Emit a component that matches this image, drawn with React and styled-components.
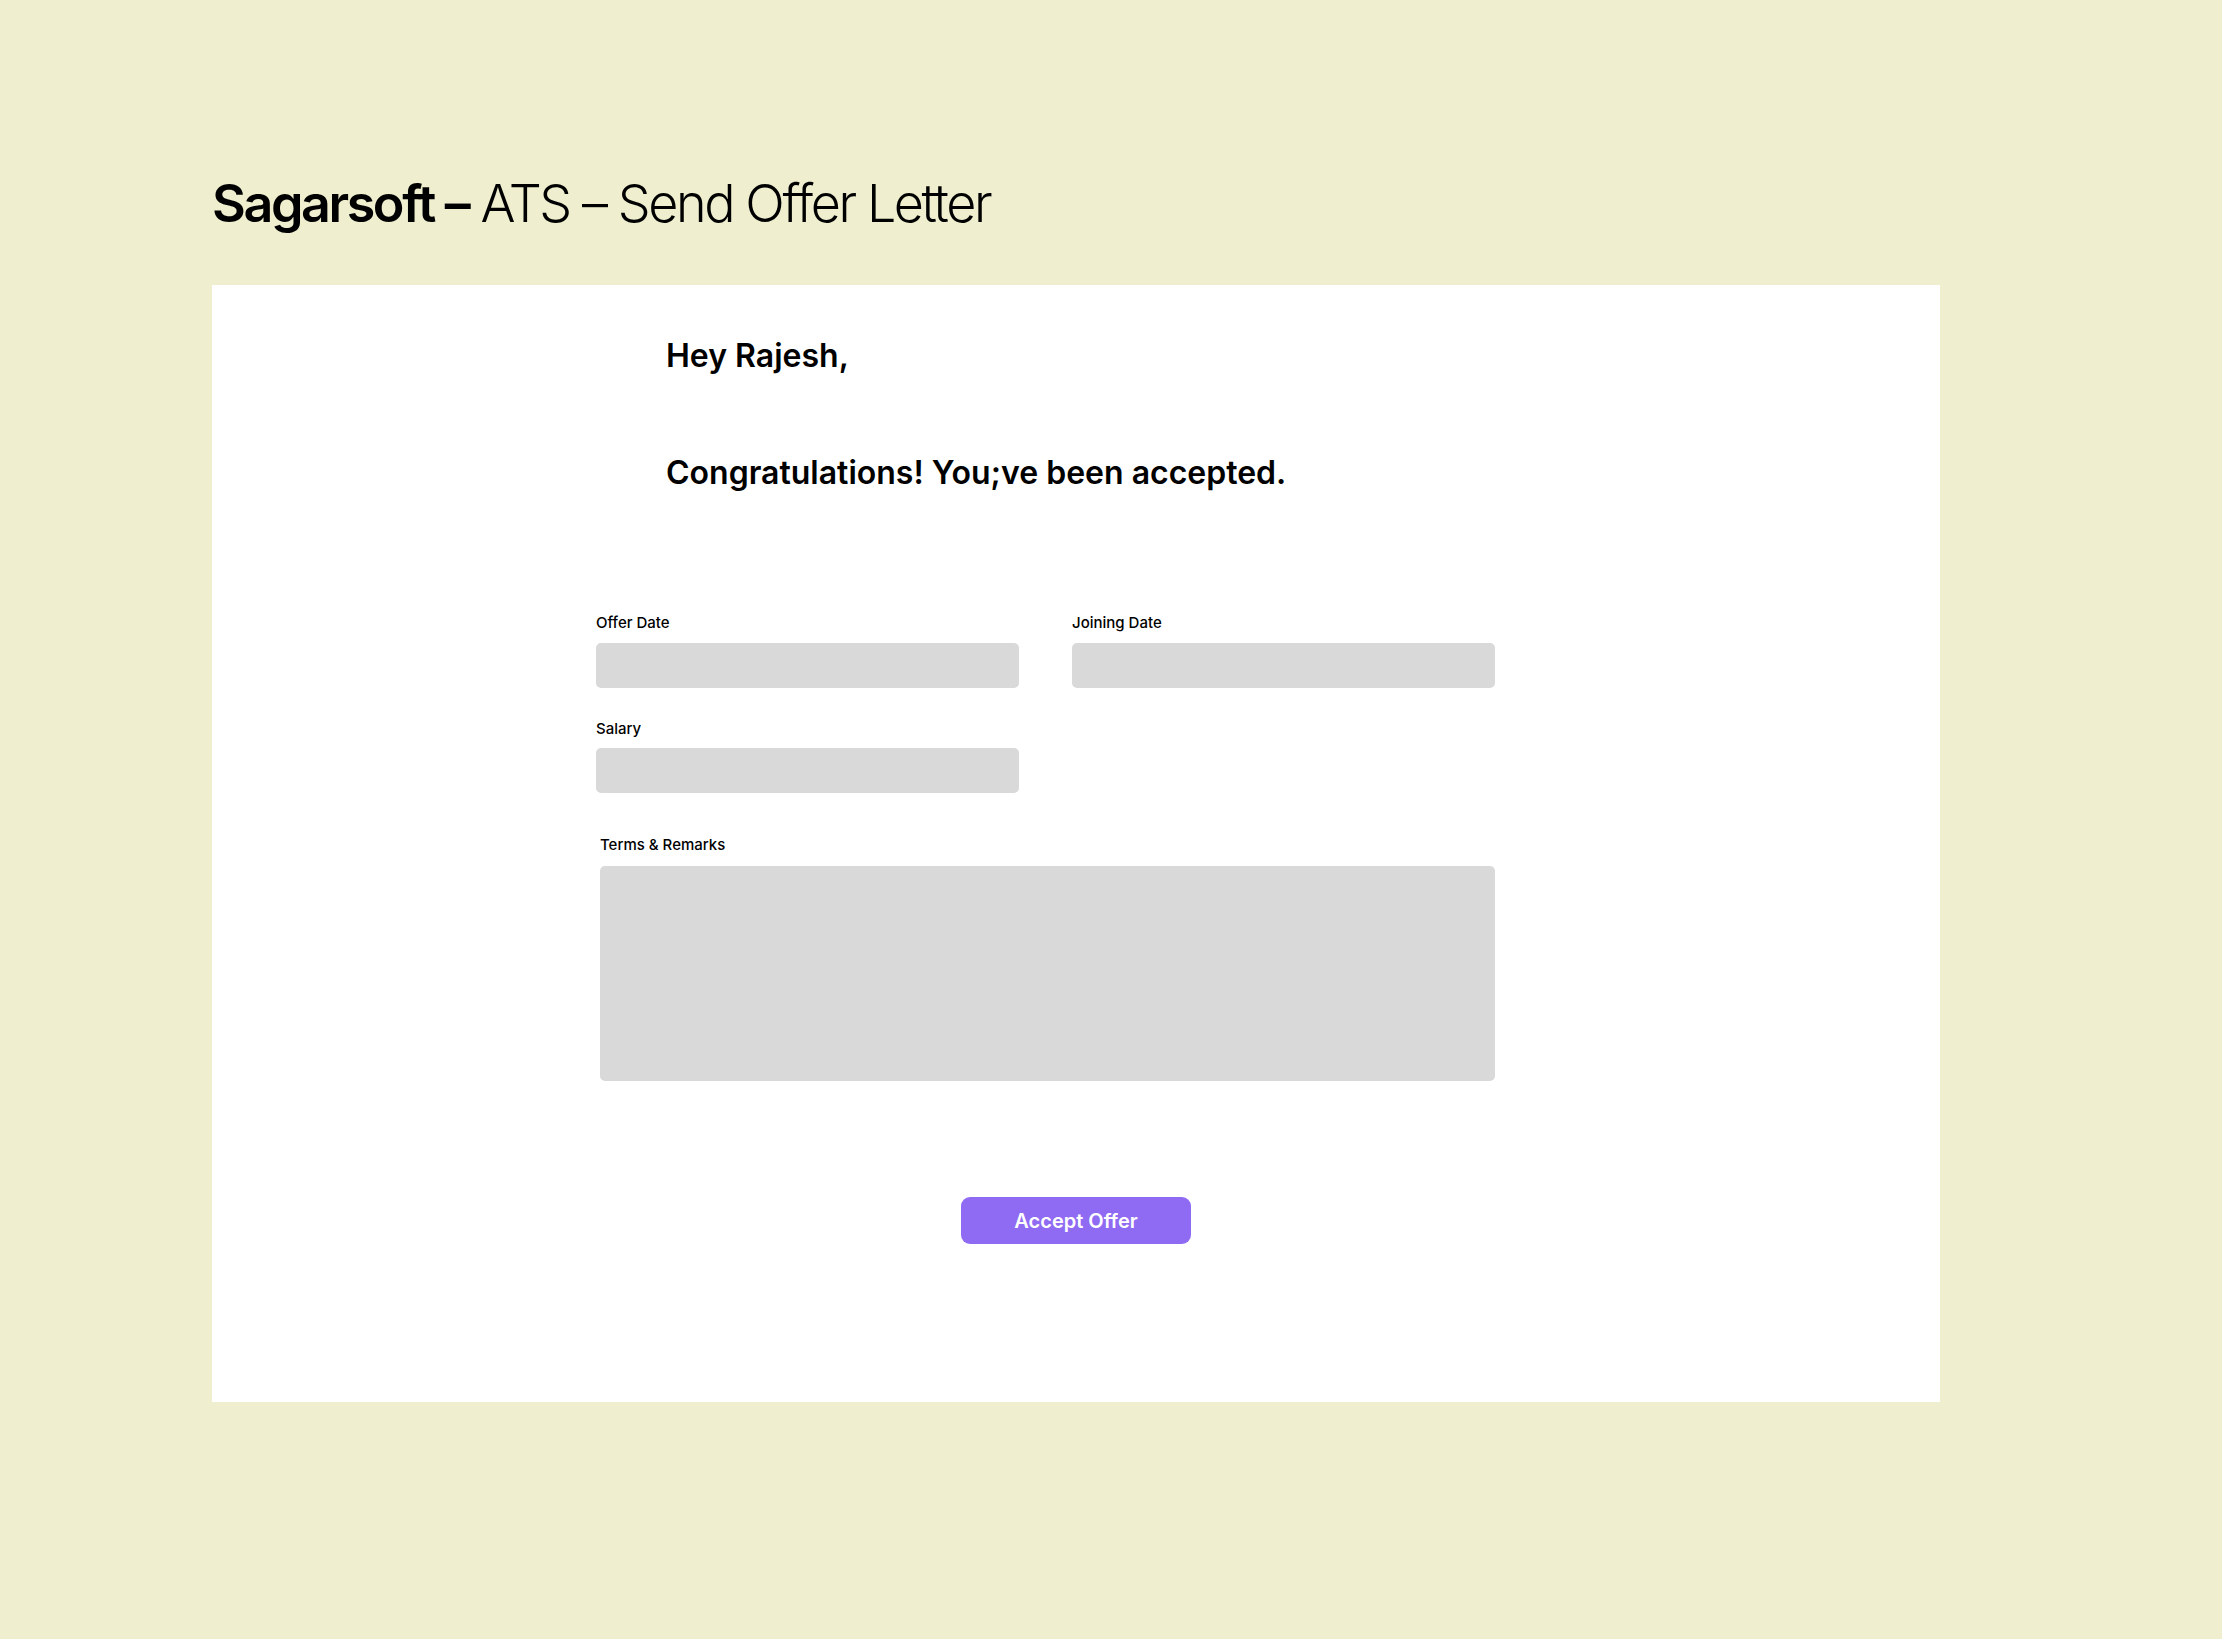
import React from 'react';
import styled, { createGlobalStyle } from 'styled-components';

const GlobalStyle = createGlobalStyle`
  body {
    margin: 0;
    background: #efefcf;
    font-family: Inter, "Noto Sans", sans-serif;
    color: #000;
  }
`;

const Page = styled.div`
  padding: 172px 282px 200px 212px;
`;

const Title = styled.h1`
  margin: 0 0 50px;
  font-size: 52px;
  line-height: 63px;
  font-weight: 300;
  letter-spacing: -2.4px;

  strong {
    font-weight: 600;
  }
`;

const Card = styled.div`
  background: #fff;
  height: 1117px;
  box-sizing: border-box;
  padding: 51px 0 0;
  display: flex;
  flex-direction: column;
`;

const Letter = styled.div`
  margin-left: 454px;
  display: flex;
  flex-direction: column;
  gap: 78px;
`;

const Line = styled.p`
  margin: 0;
  font-size: 32px;
  line-height: 39px;
  font-weight: 600;
`;

const Form = styled.div`
  margin: 122px 0 0 384px;
  width: 899px;
  display: grid;
  grid-template-columns: 423px 423px;
  column-gap: 53px;
  row-gap: 32px;
`;

const Field = styled.label`
  display: flex;
  flex-direction: column;
  gap: ${(p) => p.gap || 11}px;
  grid-column: ${(p) => (p.wide ? '1 / -1' : 'auto')};
  padding-left: ${(p) => (p.wide ? 4 : 0)}px;
  margin-top: ${(p) => (p.wide ? 11 : 0)}px;
`;

const Label = styled.span`
  font-size: 15px;
  line-height: 18px;
  font-weight: 500;
`;

const Input = styled.div`
  height: 45px;
  background: #d9d9d9;
  border-radius: 5px;
`;

const TextArea = styled(Input)`
  height: 215px;
`;

const Actions = styled.div`
  display: flex;
  justify-content: center;
  margin-top: 116px;
`;

const Button = styled.button`
  width: 230px;
  height: 47px;
  border: none;
  border-radius: 9px;
  background: #8f6af3;
  color: #fff;
  font-family: Inter, sans-serif;
  font-size: 20px;
  font-weight: 600;
  cursor: pointer;
`;

export default function App() {
  return (
    <>
      <GlobalStyle />
      <Page>
        <Title>
          <strong>Sagarsoft –</strong> ATS – Send Offer Letter
        </Title>
        <Card>
          <Letter>
            <Line>Hey Rajesh,</Line>
            <Line>Congratulations! You;ve been accepted.</Line>
          </Letter>
          <Form>
            <Field>
              <Label>Offer Date</Label>
              <Input />
            </Field>
            <Field>
              <Label>Joining Date</Label>
              <Input />
            </Field>
            <Field gap={10}>
              <Label>Salary</Label>
              <Input />
            </Field>
            <div />
            <Field wide gap={12}>
              <Label>Terms &amp; Remarks</Label>
              <TextArea />
            </Field>
          </Form>
          <Actions>
            <Button>Accept Offer</Button>
          </Actions>
        </Card>
      </Page>
    </>
  );
}
